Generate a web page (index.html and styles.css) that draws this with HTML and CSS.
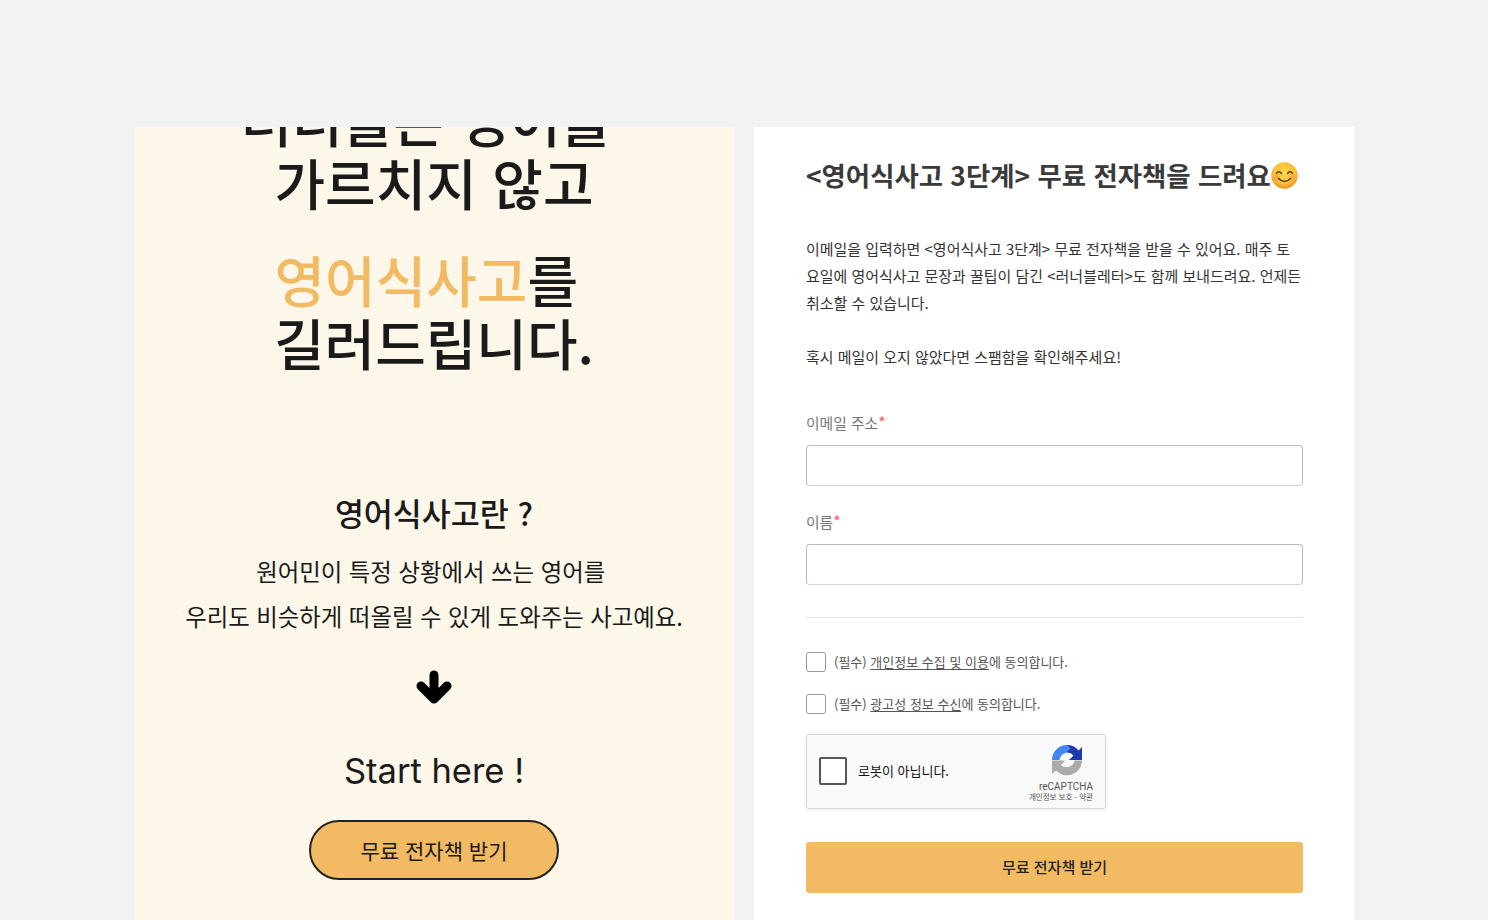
FILE: index.html
```html
<!DOCTYPE html>
<html lang="ko">

<head>
    <meta charset="UTF-8">
    <meta name="viewport" content="width=device-width, initial-scale=1.0">
    <title>영어식사고 3단계</title>
    <link rel="stylesheet" href="styles.css">
</head>

<body>
    <div class="page">
        <section class="promo">
            <h1 class="headline">
                <span class="line">러너블은 영어를&nbsp;</span>
                <span class="line">가르치지 않고</span>
            </h1>
            <h1 class="headline headline-second">
                <span class="line"><em>영어식사고</em>를&nbsp;</span>
                <span class="line">길러드립니다.</span>
            </h1>
            <h2 class="what">영어식사고란 ?</h2>
            <p class="desc">원어민이 특정 상황에서 쓰는 영어를&nbsp;</p>
            <p class="desc">우리도 비슷하게 떠올릴 수 있게 도와주는 사고예요.</p>
            <svg class="arrow" width="36" height="34" viewBox="0 0 36 34">
                <path d="M18 5v23M5 16l13 13 13-13" fill="none" stroke="#000" stroke-width="9" stroke-linecap="round" stroke-linejoin="round"/>
            </svg>
            <div class="start">Start here !</div>
            <a class="pill" href="#">무료 전자책 받기</a>
        </section>

        <section class="signup">
            <h2 class="title">&lt;영어식사고 3단계&gt; 무료 전자책을 드려요<svg class="smile" width="27" height="27" viewBox="0 0 27 27">
                    <defs>
                        <radialGradient id="face" cx="50%" cy="40%" r="60%">
                            <stop offset="0" stop-color="#ffd84d"/>
                            <stop offset="0.7" stop-color="#fcbf33"/>
                            <stop offset="1" stop-color="#f08a1d"/>
                        </radialGradient>
                    </defs>
                    <circle cx="13.5" cy="13.5" r="13.2" fill="url(#face)"/>
                    <circle cx="6" cy="16" r="3" fill="#f79a5c" opacity=".6"/>
                    <circle cx="21" cy="16" r="3" fill="#f79a5c" opacity=".6"/>
                    <path d="M5.5 11.5q2.5-3.5 5 0M16.5 11.5q2.5-3.5 5 0M7.5 16.5q6 6 12 0" fill="none" stroke="#5b3a12" stroke-width="1.4" stroke-linecap="round"/>
                </svg></h2>
            <p class="intro">이메일을 입력하면 &lt;영어식사고 3단계&gt; 무료 전자책을 받을 수 있어요. 매주 토<br>요일에 영어식사고 문장과 꿀팁이 담긴 &lt;러너블레터&gt;도 함께 보내드려요. 언제든<br>취소할 수 있습니다.</p>
            <p class="intro intro-last">혹시 메일이 오지 않았다면 스팸함을 확인해주세요!</p>

            <label class="field-label field-first">이메일 주소<span class="req">*</span></label>
            <input class="field" type="text">
            <label class="field-label">이름<span class="req">*</span></label>
            <input class="field" type="text">

            <hr class="rule">

            <div class="agree"><span class="box"></span><span>(필수) <u>개인정보 수집 및 이용</u>에 동의합니다.</span></div>
            <div class="agree agree-second"><span class="box"></span><span>(필수) <u>광고성 정보 수신</u>에 동의합니다.</span></div>

            <div class="captcha">
                <span class="captcha-check"></span>
                <span class="captcha-text">로봇이 아닙니다.</span>
                <div class="captcha-logo">
                    <svg class="captcha-icon" width="30" height="31" viewBox="0 0 30 31">
                        <path d="M30 15.500A15 15 0 0 1 4 25.500L0 29V15.500H13L9 20A8 8 0 0 0 22.500 15.500Z" fill="#ababab"/>
                        <path d="M14 0A15 15 0 0 1 26.500 5.500L30 2V15H17L21.500 10.500A8 8 0 0 0 14 7.500L17 4Z" fill="#1c3aa9"/>
                        <path d="M15 0L18.500 3.500L13.500 8A8 8 0 0 0 7.500 15H0A15 15 0 0 1 15 0Z" fill="#4285f4"/>
                    </svg>
                    <div class="captcha-brand">reCAPTCHA</div>
                    <div class="captcha-links">개인정보 보호 - 약관</div>
                </div>
            </div>

            <button class="submit" type="button">무료 전자책 받기</button>
        </section>
    </div>
</body>

</html>
```

FILE: styles.css
```css
body {
    margin: 0;
    height: 920px;
    overflow: hidden;
    background-color: #f2f2f2;
    font-family: "Noto Sans CJK KR", "Noto Sans", sans-serif;
    color: #222;
}

.page {
    display: flex;
    justify-content: center;
    gap: 20px;
    padding-top: 127px;
    height: 793px;
    overflow: hidden;
}

.promo,
.signup {
    width: 600px;
    box-sizing: border-box;
    overflow: hidden;
}

.promo {
    display: flex;
    flex-direction: column;
    align-items: center;
    background-color: #fdf7e9;
    text-align: center;
    color: #1a1a1a;
}

.headline {
    margin: -40px 0 0;
    font-size: 55px;
    line-height: 63px;
    font-weight: 500;
}

.headline-second {
    margin-top: 34px;
}

.headline .line {
    display: block;
}

.headline em {
    font-style: normal;
    color: #f2ba63;
}

.what {
    margin: 117px 0 0;
    font-size: 31.5px;
    line-height: 44px;
    font-weight: 500;
}

.desc {
    margin: 0;
    font-size: 23.4px;
    line-height: 45px;
    white-space: nowrap;
}

.what + .desc {
    margin-top: 15px;
}

.arrow {
    display: block;
    margin-top: 31px;
}

.start {
    margin-top: 45px;
    font-family: "Inter", sans-serif;
    font-size: 34.5px;
    line-height: 44px;
}

.pill {
    display: flex;
    justify-content: center;
    align-items: center;
    box-sizing: border-box;
    width: 250px;
    height: 60px;
    margin-top: 27px;
    background-color: #f2ba63;
    border: 2px solid #222;
    border-radius: 30px;
    color: #1a1a1a;
    font-size: 21px;
    text-decoration: none;
}

.signup {
    padding: 0 51px 0 52px;
    background-color: #fff;
}

.title {
    display: flex;
    align-items: center;
    margin: 28px 0 0;
    font-size: 26.4px;
    line-height: 40px;
    font-weight: 700;
    color: #3a3a3a;
    white-space: nowrap;
}

.smile {
    flex: none;
}

.intro {
    margin: 40px 0 0;
    font-size: 14.97px;
    line-height: 27px;
    color: #333;
    white-space: nowrap;
}

.intro-last {
    margin-top: 27px;
}

.field-label {
    display: block;
    margin-top: 25px;
    font-size: 14.8px;
    line-height: 22px;
    color: #777;
}

.field-first {
    margin-top: 42px;
}

.req {
    font-size: 16px;
    line-height: 1;
    color: #ff5a5f;
}

.field {
    display: block;
    box-sizing: border-box;
    width: 100%;
    height: 41px;
    margin-top: 11px;
    background: #fff;
    border: 1px solid #bbb;
    border-bottom-color: #d4d4d4;
    border-radius: 4px;
}

.rule {
    margin: 32px 0 0;
    border: none;
    border-top: 1px solid #e4e4e8;
}

.agree {
    display: flex;
    align-items: center;
    gap: 8px;
    margin-top: 34px;
    font-size: 13px;
    line-height: 20px;
    color: #555;
}

.agree-second {
    margin-top: 22px;
}

.agree u {
    text-underline-offset: 2px;
}

.box {
    flex: none;
    box-sizing: border-box;
    width: 20px;
    height: 20px;
    background: #fff;
    border: 1px solid #999;
    border-radius: 3px;
}

.captcha {
    display: flex;
    align-items: center;
    box-sizing: border-box;
    width: 300px;
    height: 75px;
    margin-top: 20px;
    padding: 0 12px 2px;
    background: #f9f9f9;
    border: 1px solid #d6d6d6;
    border-radius: 3px;
    box-shadow: 0 0 4px rgba(0, 0, 0, 0.08);
}

.captcha-check {
    flex: none;
    box-sizing: border-box;
    width: 28px;
    height: 28px;
    background: #fff;
    border: 2px solid #555;
    border-radius: 2px;
}

.captcha-text {
    margin-left: 11px;
    font-size: 13px;
    color: #111;
}

.captcha-logo {
    display: flex;
    flex-direction: column;
    align-items: flex-end;
    margin-left: auto;
    margin-top: 6px;
    color: #555;
}

.captcha-icon {
    margin-right: 11px;
}

.captcha-brand {
    margin-top: 4px;
    font-family: "Roboto", sans-serif;
    font-size: 10px;
    line-height: 14px;
}

.captcha-links {
    margin-top: -2px;
    font-size: 7.5px;
    line-height: 10px;
    white-space: nowrap;
}

.submit {
    display: block;
    width: 100%;
    height: 51px;
    margin-top: 33px;
    padding: 0 0 2px;
    background-color: #f2ba63;
    border: none;
    border-radius: 3px;
    color: #222;
    font-family: inherit;
    font-size: 15px;
    font-weight: 500;
}
```
